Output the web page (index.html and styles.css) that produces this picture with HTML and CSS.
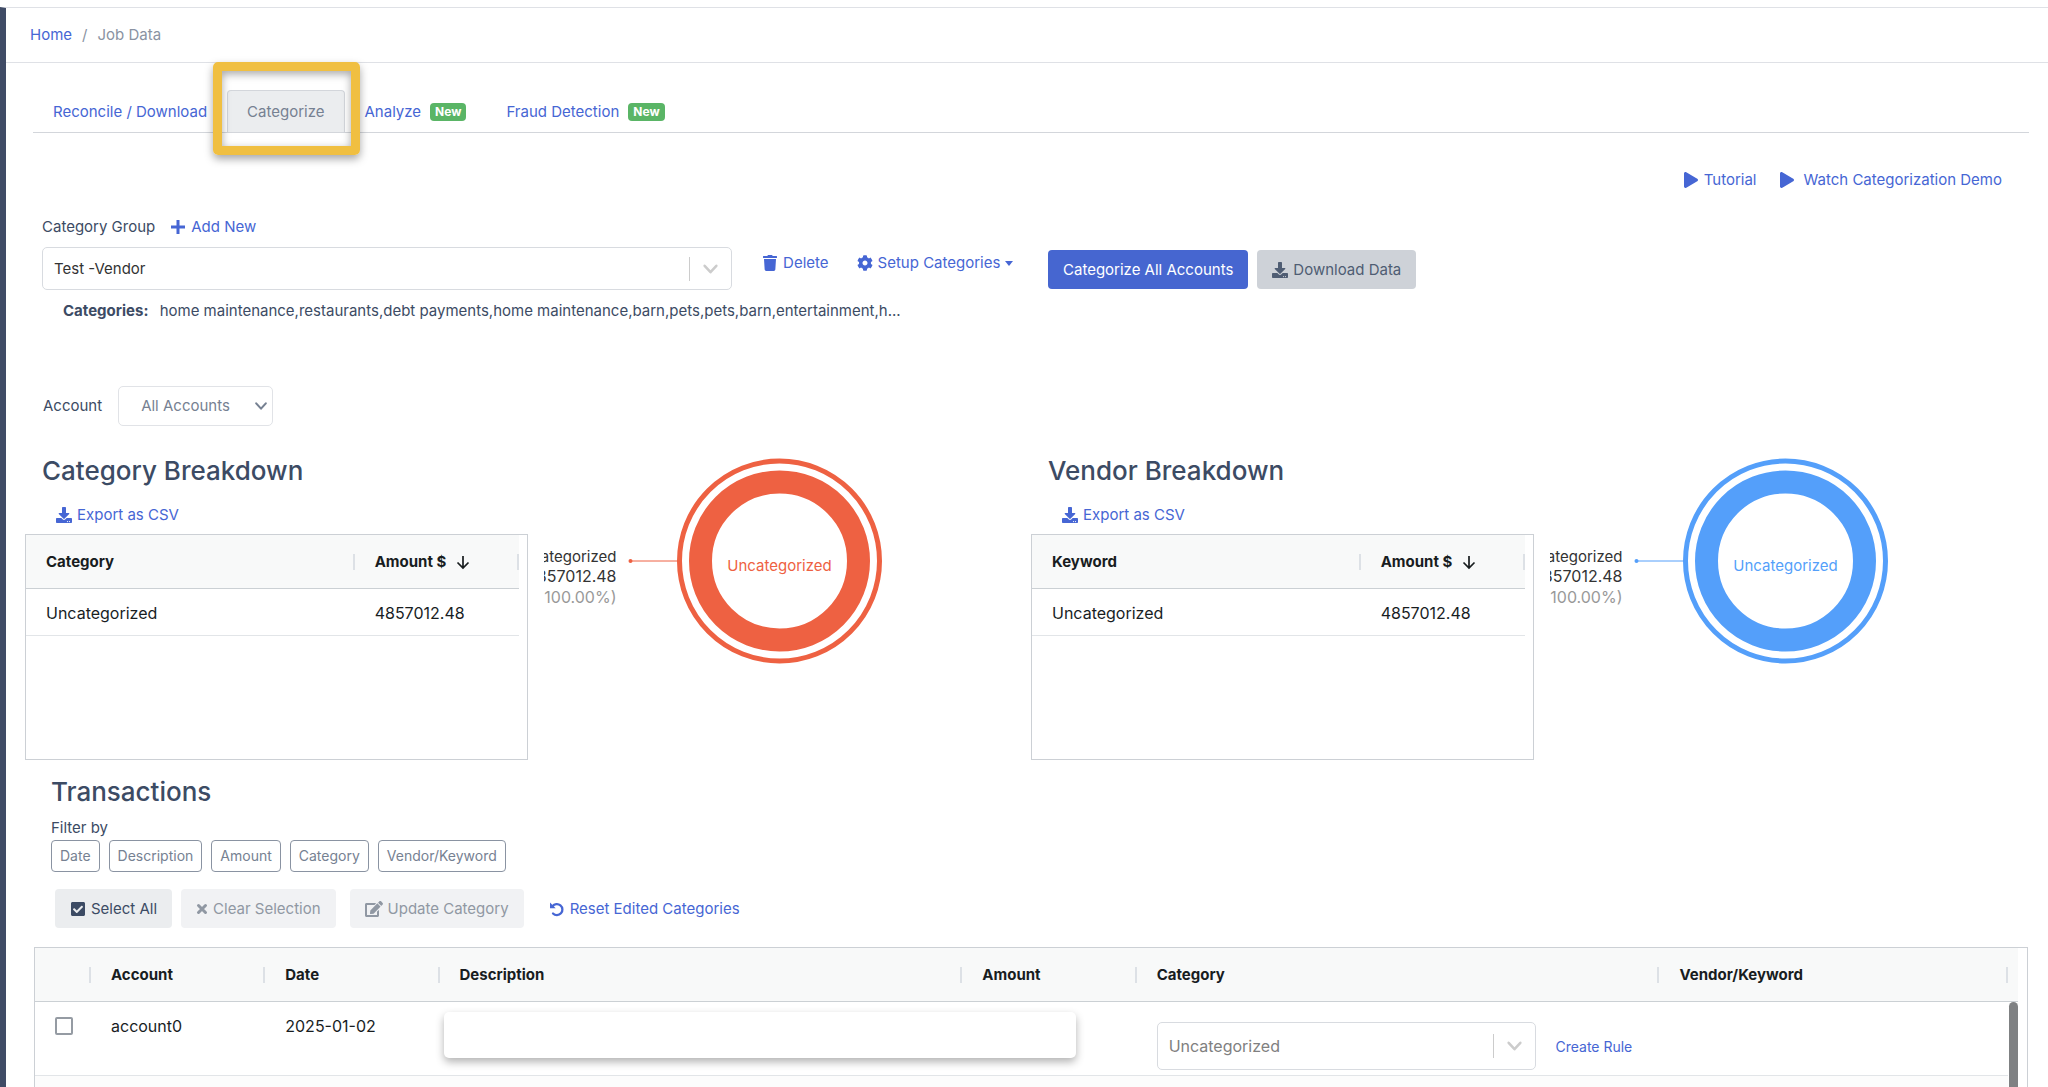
FILE: index.html
```
<!DOCTYPE html>
<html lang="en">
  <head>
    <meta charset="UTF-8" />
    <meta name="viewport" content="width=device-width, initial-scale=1.0" />
    <title>Job Data</title>
    <link rel="stylesheet" href="styles.css" />
  </head>
  <body>
    <!-- Shared icons -->
    <svg class="icon-defs" aria-hidden="true">
      <symbol id="icon-download" viewBox="0 0 512 512">
        <path d="M216 0h80c13.3 0 24 10.7 24 24v168h87.7c17.8 0 26.7 21.5 14.1 34.1L269.7 378.3c-7.5 7.5-19.8 7.5-27.3 0L90.1 226.1c-12.6-12.6-3.7-34.1 14.1-34.1H192V24c0-13.3 10.7-24 24-24zm296 376v112c0 13.3-10.7 24-24 24H24c-13.3 0-24-10.7-24-24V376c0-13.3 10.7-24 24-24h146.7l49 49c20.1 20.1 52.5 20.1 72.6 0l49-49H488c13.3 0 24 10.7 24 24zm-124 88c0-11-9-20-20-20s-20 9-20 20 9 20 20 20 20-9 20-20zm64 0c0-11-9-20-20-20s-20 9-20 20 9 20 20 20 20-9 20-20z" />
      </symbol>
      <symbol id="icon-play" viewBox="0 0 448 512">
        <path d="M424.4 214.7L72.4 6.6C43.8-10.3 0 6.1 0 47.9V464c0 37.5 40.7 60.1 72.4 41.3l352-208c31.4-18.5 31.5-64.1 0-82.6z" />
      </symbol>
      <symbol id="icon-chevron" viewBox="0 0 16 16">
        <path d="M2.5 5L8 11l5.500-6" fill="none" stroke="currentColor" stroke-width="2.400" stroke-linecap="round" stroke-linejoin="round" />
      </symbol>
      <symbol id="icon-sort" viewBox="0 0 16 16">
        <path d="M8 2v12M2.500 8.500L8 14l5.500-5.500" fill="none" stroke="currentColor" stroke-width="1.700" />
      </symbol>
    </svg>

    <div class="wrapper">
      <nav class="breadcrumb" aria-label="Breadcrumb">
        <a href="#">Home</a>
        <span class="slash">/</span>
        <span>Job Data</span>
      </nav>

      <main class="main">
        <!-- Tabs -->
        <nav class="tabs">
          <a class="tab" href="#">Reconcile / Download</a>
          <a class="tab active" href="#" aria-current="page">Categorize</a>
          <a class="tab" href="#">Analyze <span class="badge">New</span></a>
          <a class="tab" href="#">Fraud Detection <span class="badge">New</span></a>
        </nav>

        <div class="help-links">
          <a class="link" href="#"><svg class="icon"><use href="#icon-play" /></svg>Tutorial</a>
          <a class="link wide" href="#"><svg class="icon"><use href="#icon-play" /></svg>Watch Categorization Demo</a>
        </div>

        <!-- Category group -->
        <section class="columns group">
          <div class="group-left">
            <div class="group-label">
              <label for="group">Category Group</label>
              <a class="link" href="#">
                <svg class="icon" viewBox="0 0 16 16"><path d="M6.500 1h3v5.500H15v3H9.500V15h-3V9.500H1v-3h5.500z" /></svg>Add New
              </a>
            </div>
            <div class="group-row">
              <div class="select-box">
                <select id="group">
                  <option>Test -Vendor</option>
                </select>
                <span class="indicator"><svg><use href="#icon-chevron" /></svg></span>
              </div>
              <a class="link" href="#">
                <svg class="icon" viewBox="0 0 448 512"><path d="M432 32H312l-9.400-18.700A24 24 0 0 0 281.100 0H166.800a23.720 23.720 0 0 0-21.400 13.300L136 32H16A16 16 0 0 0 0 48v32a16 16 0 0 0 16 16h416a16 16 0 0 0 16-16V48a16 16 0 0 0-16-16zM53.200 467a48 48 0 0 0 47.900 45h245.800a48 48 0 0 0 47.900-45L416 128H32z" /></svg>Delete
              </a>
              <a class="link setup" href="#">
                <svg class="icon" viewBox="0 0 512 512"><path d="M487.4 315.7l-42.6-24.6c4.3-23.2 4.3-47 0-70.2l42.6-24.6c4.9-2.8 7.1-8.6 5.5-14-11.1-35.6-30-67.8-54.7-94.6-3.8-4.1-10-5.1-14.8-2.3L380.8 110c-17.9-15.4-38.5-27.3-60.8-35.1V25.8c0-5.6-3.9-10.5-9.4-11.7-36.7-8.2-74.3-7.8-109.2 0-5.5 1.2-9.4 6.1-9.4 11.7V75c-22.2 7.900-42.800 19.800-60.800 35.100L88.700 85.500c-4.900-2.800-11-1.900-14.800 2.300-24.700 26.700-43.600 58.900-54.700 94.600-1.700 5.400.6 11.200 5.500 14L67.300 221c-4.300 23.200-4.300 47 0 70.200l-42.600 24.600c-4.900 2.800-7.100 8.600-5.500 14 11.100 35.600 30 67.800 54.700 94.600 3.800 4.100 10 5.100 14.800 2.300l42.600-24.600c17.900 15.400 38.500 27.300 60.800 35.100v49.200c0 5.600 3.900 10.500 9.400 11.700 36.700 8.200 74.300 7.800 109.200 0 5.500-1.200 9.400-6.100 9.400-11.700v-49.200c22.200-7.900 42.800-19.800 60.800-35.100l42.600 24.600c4.900 2.800 11 1.900 14.800-2.300 24.700-26.700 43.600-58.900 54.700-94.600 1.500-5.500-.7-11.300-5.600-14.100zM256 336c-44.100 0-80-35.900-80-80s35.900-80 80-80 80 35.900 80 80-35.900 80-80 80z" /></svg>Setup Categories<span class="caret"></span>
              </a>
            </div>
            <p class="categories"><b>Categories:</b> home maintenance,restaurants,debt payments,home maintenance,barn,pets,pets,barn,entertainment,h...</p>
          </div>
          <div class="group-actions">
            <button class="btn primary">Categorize All Accounts</button>
            <button class="btn secondary"><svg class="icon"><use href="#icon-download" /></svg>Download Data</button>
          </div>
        </section>

        <div class="account">
          <label for="account">Account</label>
          <div class="account-box">
            <select id="account">
              <option>All Accounts</option>
            </select>
            <svg><use href="#icon-chevron" /></svg>
          </div>
        </div>

        <!-- Breakdown panels -->
        <section class="columns">
          <div>
            <h2 class="panel-title">Category Breakdown</h2>
            <a class="link export" href="#"><svg class="icon"><use href="#icon-download" /></svg>Export as CSV</a>
            <div class="panel-body">
              <div class="grid-box">
                <table class="data-table breakdown">
                  <thead>
                    <tr>
                      <th>Category</th>
                      <th>Amount $ <svg class="sort"><use href="#icon-sort" /></svg></th>
                    </tr>
                  </thead>
                  <tbody>
                    <tr>
                      <td>Uncategorized</td>
                      <td>4857012.48</td>
                    </tr>
                  </tbody>
                </table>
              </div>
              <div class="chart-box">
                <svg class="chart red">
                  <svg x="50%" y="107" overflow="visible">
                    <circle class="ring" r="79" stroke-width="23" />
                    <circle class="ring" r="100" stroke-width="5" />
                    <path class="leader" d="M-149 0h48" />
                    <circle class="dot" cx="-149" r="2" />
                    <text class="center" y="10">Uncategorized</text>
                    <text class="name" x="-163" y="1">Uncategorized</text>
                    <text class="value" x="-163" y="21">4857012.48</text>
                    <text class="percent" x="-163" y="42">(100.00%)</text>
                  </svg>
                </svg>
              </div>
            </div>
          </div>

          <div>
            <h2 class="panel-title">Vendor Breakdown</h2>
            <a class="link export" href="#"><svg class="icon"><use href="#icon-download" /></svg>Export as CSV</a>
            <div class="panel-body">
              <div class="grid-box">
                <table class="data-table breakdown">
                  <thead>
                    <tr>
                      <th>Keyword</th>
                      <th>Amount $ <svg class="sort"><use href="#icon-sort" /></svg></th>
                    </tr>
                  </thead>
                  <tbody>
                    <tr>
                      <td>Uncategorized</td>
                      <td>4857012.48</td>
                    </tr>
                  </tbody>
                </table>
              </div>
              <div class="chart-box">
                <svg class="chart blue">
                  <svg x="50%" y="107" overflow="visible">
                    <circle class="ring" r="79" stroke-width="23" />
                    <circle class="ring" r="100" stroke-width="5" />
                    <path class="leader" d="M-149 0h48" />
                    <circle class="dot" cx="-149" r="2" />
                    <text class="center" y="10">Uncategorized</text>
                    <text class="name" x="-163" y="1">Uncategorized</text>
                    <text class="value" x="-163" y="21">4857012.48</text>
                    <text class="percent" x="-163" y="42">(100.00%)</text>
                  </svg>
                </svg>
              </div>
            </div>
          </div>
        </section>

        <!-- Transactions -->
        <section class="transactions">
          <h2>Transactions</h2>
          <div class="filter-label">Filter by</div>
          <div class="filters">
            <button>Date</button>
            <button>Description</button>
            <button>Amount</button>
            <button>Category</button>
            <button>Vendor/Keyword</button>
          </div>
          <div class="actions">
            <button class="btn light">
              <svg class="icon" viewBox="0 0 448 512"><path d="M400 480H48c-26.510 0-48-21.490-48-48V80c0-26.510 21.490-48 48-48h352c26.510 0 48 21.490 48 48v352c0 26.510-21.490 48-48 48zm-204.686-98.059l184-184c6.248-6.248 6.248-16.379 0-22.627l-22.627-22.627c-6.248-6.248-16.379-6.249-22.628 0L184 302.745l-70.059-70.059c-6.248-6.248-16.379-6.248-22.628 0l-22.627 22.627c-6.248 6.248-6.248 16.379 0 22.627l104 104c6.249 6.250 16.379 6.250 22.628.001z" /></svg>Select All
            </button>
            <button class="btn light" disabled>
              <svg class="icon narrow" viewBox="0 0 12 16"><path d="M2.500 4.500l7 7M9.500 4.500l-7 7" stroke="currentColor" stroke-width="3" stroke-linecap="round" /></svg>Clear Selection
            </button>
            <button class="btn light update" disabled>
              <svg class="icon large" viewBox="0 0 576 512"><path d="M402.600 83.200l90.200 90.200c3.800 3.800 3.800 10 0 13.800L274.400 405.600l-92.800 10.300c-12.400 1.400-22.900-9.100-21.500-21.500l10.300-92.800L388.800 83.200c3.800-3.800 10-3.800 13.800 0zm162-22.900l-48.800-48.800c-15.200-15.200-39.900-15.200-55.200 0l-35.400 35.400c-3.800 3.800-3.800 10 0 13.800l90.200 90.200c3.800 3.800 10 3.800 13.800 0l35.400-35.400c15.200-15.300 15.200-40 0-55.200zM384 346.200V448H64V128h229.800c3.200 0 6.200-1.300 8.500-3.500l40-40c7.600-7.600 2.200-20.500-8.500-20.500H48C21.500 64 0 85.500 0 112v352c0 26.500 21.500 48 48 48h352c26.500 0 48-21.500 48-48V306.200c0-10.700-12.900-16-20.500-8.500l-40 40c-2.200 2.300-3.500 5.300-3.500 8.500z" /></svg>Update Category
            </button>
            <a class="link reset" href="#">
              <svg class="icon" viewBox="0 0 16 16"><path d="M3.500 5.300A5.500 5.500 0 1 1 4 12.500" fill="none" stroke="currentColor" stroke-width="2.300" stroke-linecap="round" /><path d="M1 1.500v5.700h5.700z" /></svg>Reset Edited Categories
            </a>
          </div>
        </section>

        <div class="transactions-grid">
          <table class="data-table ledger">
            <thead>
              <tr>
                <th></th>
                <th>Account</th>
                <th>Date</th>
                <th>Description</th>
                <th>Amount</th>
                <th>Category</th>
                <th>Vendor/Keyword</th>
              </tr>
            </thead>
            <tbody>
              <tr>
                <td class="check"><input type="checkbox" aria-label="Select row" /></td>
                <td>account0</td>
                <td>2025-01-02</td>
                <td class="description"><div class="cover"></div></td>
                <td></td>
                <td class="category">
                  <div class="select-box">
                    <select aria-label="Category">
                      <option>Uncategorized</option>
                    </select>
                    <span class="indicator"><svg><use href="#icon-chevron" /></svg></span>
                  </div>
                </td>
                <td class="rule"><a class="link small" href="#">Create Rule</a></td>
              </tr>
              <tr class="odd">
                <td></td><td></td><td></td><td></td><td></td><td></td><td></td>
              </tr>
            </tbody>
          </table>
          <div class="scrollbar"></div>
        </div>
      </main>
    </div>
  </body>
</html>
```

FILE: styles.css
```
* {
  box-sizing: border-box;
}

body {
  margin: 0;
  height: 100vh;
  overflow: hidden;
  padding-top: 7px;
  background-color: #fff;
  color: #3c4b64;
  font-family: Inter, "Liberation Sans", sans-serif;
  font-size: 15px;
  line-height: 24px;
}

a {
  color: #4666d4;
  text-decoration: none;
}

button,
select {
  font: inherit;
  color: inherit;
}

h2 {
  margin: 0;
  font-size: 26px;
  line-height: 32px;
  font-weight: 500;
}

svg {
  display: block;
  flex-shrink: 0;
}

.icon-defs {
  display: none;
}

.icon {
  width: 16px;
  height: 16px;
  fill: currentColor;
}

.icon.narrow {
  width: 12px;
}

.icon.large {
  width: 18px;
}

.wrapper {
  border-top: 1px solid #dfe1e6;
  border-left: 6px solid #404c66;
  height: 100%;
  overflow: hidden;
}

.breadcrumb {
  display: flex;
  gap: 10px;
  padding: 15px 24px;
  border-bottom: 1px solid #dfe1e6;
  color: #8a93a2;
}

.main {
  padding: 27px 11px 0 19px;
}

/* Tabs */
.tabs {
  display: flex;
  margin: 0 8px;
  border-bottom: 1px solid #d3d6db;
}

.tab {
  display: flex;
  align-items: center;
  gap: 9px;
  height: 42px;
  padding: 0 19px;
  border: 1px solid transparent;
  border-bottom: none;
  white-space: nowrap;
}

.tab.active {
  position: relative;
  background-color: #ebedef;
  border-color: #d3d6db;
  border-radius: 4px 4px 0 0;
  color: #768192;
}

.tab.active::after {
  content: "";
  position: absolute;
  inset: -29px -16px -23px -15px;
  border: 9px solid #f0bf41;
  border-radius: 5px;
  box-shadow: 0 4px 8px rgba(0, 0, 0, 0.35), inset 0 3px 8px rgba(0, 0, 0, 0.35);
}

.badge {
  padding: 0 5px;
  border-radius: 4px;
  background-color: #5ab566;
  color: #fff;
  font-size: 12px;
  line-height: 18px;
  font-weight: 700;
}

.link {
  display: inline-flex;
  align-items: center;
  gap: 5px;
  white-space: nowrap;
}

.link.small {
  font-size: 14px;
}

.help-links {
  display: flex;
  justify-content: flex-end;
  gap: 22px;
  padding: 35px 35px 0 0;
}

.help-links .wide {
  gap: 9px;
}

.columns {
  display: grid;
  grid-template-columns: 1fr 1fr;
}

/* Category group */
.group {
  margin-top: 23px;
}

.group-left {
  padding: 0 17px;
}

.group-label {
  display: flex;
  gap: 15px;
}

.group-row {
  display: flex;
  margin-top: 8px;
}

.group-row .select-box {
  flex: 0 0 71%;
  height: 43px;
  margin-right: 30px;
}

.group-row .link {
  height: 32px;
}

.group-row .setup {
  margin-left: 28px;
}

.caret {
  border: 4px solid transparent;
  border-top: 5px solid currentColor;
  border-bottom: none;
}

.select-box {
  display: flex;
  align-items: center;
  border: 1px solid #d8dbe0;
  border-radius: 5px;
  background-color: #fff;
}

.select-box select {
  flex: 1;
  height: 100%;
  padding: 0 11px;
  border: none;
  background: none;
  appearance: none;
  color: #333;
}

.indicator {
  padding: 3px 12px;
  border-left: 1px solid #ccc;
  color: #ccc;
}

.indicator svg {
  width: 17px;
  height: 18px;
}

.categories {
  margin: 9px 0 0 21px;
  white-space: nowrap;
}

.categories b {
  margin-right: 7px;
}

.group-actions {
  display: flex;
  align-items: flex-start;
  gap: 9px;
  padding: 35px 17px 0;
}

.btn {
  display: inline-flex;
  align-items: center;
  gap: 5px;
  height: 39px;
  padding: 0 15px;
  border: none;
  border-radius: 4px;
  white-space: nowrap;
  cursor: pointer;
}

.btn.primary {
  background-color: #4666d0;
  color: #fff;
}

.btn.secondary {
  background-color: #ced2d8;
  color: #4f5d73;
}

.btn.light {
  background-color: #ebedef;
}

.btn:disabled {
  background-color: #f1f2f4;
  color: #9098a3;
  cursor: default;
}

.account {
  display: flex;
  align-items: center;
  gap: 16px;
  margin-top: 63px;
  padding: 0 18px;
}

.account-box {
  display: flex;
  align-items: center;
  width: 155px;
  height: 40px;
  padding-right: 4px;
  border: 1px solid #e1e3e7;
  border-radius: 5px;
}

.account-box select {
  flex: 1;
  min-width: 0;
  height: 100%;
  padding: 0 0 0 22px;
  border: none;
  background: none;
  appearance: none;
  color: #768192;
}

.account-box svg {
  width: 14px;
  height: 16px;
  color: #768192;
}

/* Breakdown panels */
.panel-title {
  margin: 29px 17px 0;
}

.export {
  margin: 16px 0 7px 31px;
}

.panel-body {
  display: grid;
  grid-template-columns: 1fr 1fr;
  height: 226px;
}

.grid-box {
  padding-right: 8px;
  border: 1px solid #ccd0d5;
}

.data-table {
  display: block;
  color: #181d1f;
}

.data-table thead,
.data-table tbody {
  display: block;
}

.data-table tr {
  display: grid;
  border-bottom: 1px solid #e2e5e8;
}

.data-table th {
  display: flex;
  align-items: center;
  gap: 9px;
  height: 53px;
  padding: 0 20px;
  background-image: linear-gradient(#dde1e6, #dde1e6);
  background-repeat: no-repeat;
  background-position: right center;
  background-size: 2px 16px;
  font-weight: 700;
  text-align: left;
}

.data-table td {
  padding: 12px 20px 10px;
  font-size: 16px;
}

.data-table thead tr {
  background-color: #f8f9f9;
  border-bottom-color: #cbd0d4;
}

.breakdown tr {
  grid-template-columns: 2fr 1fr;
}

.sort {
  width: 16px;
  height: 16px;
}

/* the donut rises above the table's top edge */
.chart-box {
  margin-top: -80px;
  padding: 0 16px;
}

.chart {
  width: 100%;
  height: 306px;
}

.chart text {
  font-size: 16px;
  text-anchor: end;
}

.chart .center {
  text-anchor: middle;
}

.chart .center,
.chart .name {
  font-size: 15px;
}

.name,
.value {
  fill: #333;
}

.percent {
  fill: #999;
}

.ring {
  fill: none;
  stroke: currentColor;
}

.leader {
  stroke: currentColor;
}

.dot,
.center {
  fill: currentColor;
}

.red {
  color: #ee6142;
}

.blue {
  color: #549ffa;
}

/* Transactions */
.transactions {
  padding: 16px 26px 0;
}

.filter-label {
  margin-top: 8px;
}

.filters {
  display: flex;
  gap: 9px;
}

.filters button {
  height: 32px;
  padding: 0 8px;
  border: 1px solid #8a93a2;
  border-radius: 4px;
  background-color: #fff;
  color: #768192;
  font-size: 14px;
}

.actions {
  display: flex;
  align-items: center;
  gap: 9px;
  margin: 17px 4px 0;
}

.actions .update {
  margin-left: 5px;
}

.actions .reset {
  margin-left: 16px;
}

.transactions-grid {
  position: relative;
  height: 400px;
  margin: 19px 9px 0;
  padding-right: 9px;
  border: 1px solid #ccd0d5;
}

.ledger tr {
  grid-template-columns: 56px 1fr 1fr 3fr 1fr 3fr 2fr;
  margin-right: 10px;
}

.ledger thead tr {
  margin-right: 0;
  padding-right: 10px;
}

.ledger tbody tr {
  height: 74px;
}

.ledger .odd {
  background-color: #fcfcfc;
}

.ledger .check input {
  display: block;
  width: 18px;
  height: 18px;
  margin: 3px 0;
  border: 2px solid #959ba3;
  border-radius: 2px;
  background-color: #fff;
  appearance: none;
}

.ledger .check input:checked {
  background-color: #4666d4;
}

.ledger .description {
  padding: 10px 4px;
  margin-right: -118px;
}

.cover {
  height: 46px;
  border-radius: 5px;
  background-color: #fff;
  box-shadow: 0 4px 8px rgba(0, 0, 0, 0.3);
}

.ledger .category {
  padding: 20px 0 0 20px;
  margin-right: 123px;
}

.category .select-box {
  height: 48px;
}

.category .select-box select {
  color: #808080;
}

.ledger .rule {
  margin-left: -124px;
  padding-top: 32px;
}

.scrollbar {
  position: absolute;
  top: 54px;
  right: 9px;
  bottom: 0;
  width: 9px;
  border-radius: 5px;
  background-color: #7f8183;
}
```
